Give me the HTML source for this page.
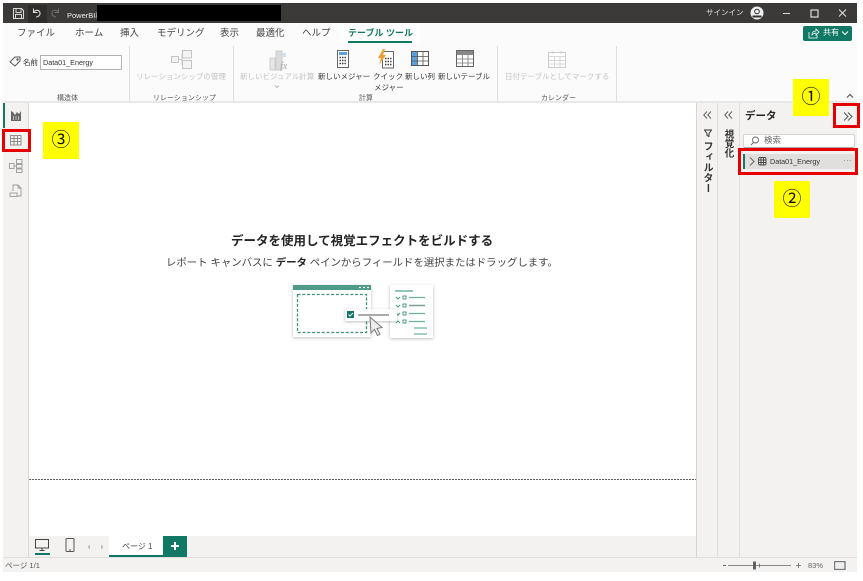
<!DOCTYPE html>
<html lang="ja"><head><meta charset="utf-8"><style>
html,body{margin:0;padding:0;background:#fff}
#p{position:relative;width:863px;height:581px;overflow:hidden;background:#fff;font-family:"Liberation Sans","Noto Sans CJK JP",sans-serif;color:#333;filter:blur(.3px)}
#p div,#p svg{position:absolute}
.t{white-space:nowrap;line-height:1}
.g{color:#c4c2c0 !important}
.line{background:#e1dfdd}
.red{border:3px solid #e60000;box-sizing:border-box}
.y{background:#ff0;color:#111;text-align:center;font-size:19px}
.tab{font-size:9.5px;color:#444;top:29px}
.rb{font-size:7.5px;color:#333;top:73px}
.gl{font-size:7px;color:#555;top:95px}
</style></head><body><div id="p">
<!-- title bar -->
<div style="left:3px;top:3px;width:854px;height:20px;background:#3b3a39"></div>
<div style="left:28px;top:5px;width:19px;height:18px;background:#2e2d2c"></div>
<svg style="left:12px;top:6px" width="50" height="15" fill="none" stroke="#d8d8d8" stroke-width="1"><path d="M1.500 2.500h8l2 2v8h-10zM4 2.500v4h5v-4M3.500 12.500v-4h6v4"/><path d="M21.500 2.500v4h4M21.500 6.500c2-3 6-3 6.500 .5 .3 2.500-2 4-4 4" stroke-width="1.100"/><path d="M46.500 2.500v4h-4M46.500 6.500c-2-3-6-3-6.500 .5-.3 2.500 2 4 4 4" stroke="#6e6d6c"/></svg>
<div class="t" style="left:67px;top:12px;font-size:7.5px;color:#eee">PowerBI検</div>
<div style="left:97px;top:5px;width:184px;height:16px;background:#000"></div>
<div class="t" style="left:706px;top:9px;font-size:7.5px;color:#ddd">サインイン</div>
<svg style="left:750px;top:6px" width="14" height="14"><circle cx="7" cy="7" r="6.500" fill="#eee"/><circle cx="7" cy="5.500" r="2.300" fill="none" stroke="#333"/><path d="M2.500 10.500h9" stroke="#333" stroke-width="2"/></svg>
<svg style="left:780px;top:7px" width="70" height="12" fill="none" stroke="#ddd"><path d="M3 6.500h7"/><rect x="31" y="3" width="7" height="7" stroke-width="1.200"/><path d="M59 2.500l7 7M66 2.500l-7 7" stroke-width="1.100"/></svg>
<!-- ribbon -->
<div style="left:3px;top:23px;width:854px;height:78px;background:#fbfbfb"></div>
<div style="left:3px;top:101px;width:854px;height:2px;background:#e9e8e7"></div>
<div style="left:339px;top:24px;width:81px;height:19px;background:#fff"></div>
<div class="t tab" style="left:17px">ファイル</div>
<div class="t tab" style="left:75px">ホーム</div>
<div class="t tab" style="left:120px">挿入</div>
<div class="t tab" style="left:157px">モデリング</div>
<div class="t tab" style="left:220px">表示</div>
<div class="t tab" style="left:256px">最適化</div>
<div class="t tab" style="left:302px">ヘルプ</div>
<div class="t tab" style="left:348px;color:#117865;font-weight:bold;font-size:9px">テーブル ツール</div>
<div style="left:348px;top:41px;width:64px;height:2px;background:#117865"></div>
<div style="left:803px;top:26px;width:49px;height:15px;background:#117865;border-radius:2px"></div>
<svg style="left:808px;top:28px" width="12" height="11" fill="none" stroke="#fff"><path d="M1 4v6h8V7M4 7c0-3 2-4 4-4V1l3 3-3 3V5c-2 0-3 1-4 2z" stroke-width=".8"/></svg>
<div class="t" style="left:823px;top:29px;font-size:8px;color:#fff">共有</div>
<svg style="left:841px;top:30px" width="8" height="7" fill="none" stroke="#fff"><path d="M1 1.500l3 3 3-3"/></svg>
<svg style="left:846px;top:93px" width="8" height="6" fill="none" stroke="#555" stroke-width="1.200"><path d="M1 4.500l3-3 3 3"/></svg>
<!-- name -->
<svg style="left:9px;top:56px" width="13" height="11" fill="none" stroke="#555"><path d="M1 6l5-5h5v4l-5 5z"/><circle cx="8.500" cy="3.500" r=".7"/></svg>
<div class="t rb" style="left:23px;top:59px">名前</div>
<div style="left:40px;top:55px;width:82px;height:15px;background:#fff;border:1px solid #b5b3b1;box-sizing:border-box"></div>
<div class="t" style="left:43px;top:59px;font-size:7.2px;color:#333">Data01_Energy</div>
<div class="line" style="left:129px;top:46px;width:1px;height:55px"></div>
<div class="line" style="left:233px;top:46px;width:1px;height:55px"></div>
<div class="line" style="left:497px;top:46px;width:1px;height:55px"></div>
<div class="line" style="left:616px;top:46px;width:1px;height:55px"></div>
<div class="t gl" style="left:57px">構造体</div>
<div class="t gl" style="left:153px">リレーションシップ</div>
<div class="t gl" style="left:359px">計算</div>
<div class="t gl" style="left:541px">カレンダー</div>
<!-- ribbon icons -->
<svg style="left:171px;top:50px" width="22" height="20" fill="#f4f4f4" stroke="#c4c4c4"><rect x=".5" y="6.500" width="7" height="6"/><rect x="11.500" y=".5" width="9" height="7.500"/><rect x="11.500" y="10.500" width="9" height="8"/><path d="M7.500 9.500h4M11 4v11" fill="none"/></svg>
<div class="t rb g" style="left:136px">リレーションシップの管理</div>
<svg style="left:269px;top:50px" width="20" height="21"><rect x="1" y="8" width="5" height="12" fill="#e6e6e6" stroke="#ccc"/><rect x="7" y="1" width="6" height="19" fill="#dcdcdc" stroke="#ccc"/><rect x="13" y="3" width="4" height="4" fill="#cfe0ee"/><text x="11" y="19" font-size="10" font-style="italic" fill="#aaa" font-family="Liberation Serif">fx</text></svg>
<div class="t rb g" style="left:240px">新しいビジュアル計算</div>
<svg style="left:274px;top:85px" width="6" height="4" fill="none" stroke="#bbb"><path d="M1 .5l2 2 2-2"/></svg>
<div class="t rb" style="left:318px">新しいメジャー</div>
<svg style="left:337px;top:50px" width="13" height="19"><rect x=".5" y=".5" width="11" height="17" fill="#fff" stroke="#666"/><rect x="2" y="2" width="8" height="3" fill="#5aa3e0"/><path d="M2.500 7.500h7M2.500 10.500h7M2.500 13.500h7" stroke="#444" stroke-width="1.500" stroke-dasharray="1.500 1"/></svg>
<div class="t rb" style="left:373px">クイック</div>
<div class="t rb" style="left:374px;top:84px">メジャー</div>
<svg style="left:377px;top:49px" width="18" height="20"><rect x="5.500" y="2.500" width="11" height="16.500" fill="#fff" stroke="#666"/><path d="M8 9.500h7M8 12.500h7M8 15.500h7" stroke="#444" stroke-width="1.500" stroke-dasharray="1.500 1"/><path d="M6 0L1 9h3l-2 7 7-10H6l2-6z" fill="#f0a030"/></svg>
<div class="t rb" style="left:405px">新しい列</div>
<svg style="left:411px;top:51px" width="19" height="16"><rect x=".5" y=".5" width="17" height="14" fill="#fff" stroke="#555"/><rect x="1" y="1" width="5.500" height="13" fill="#5aa3e0"/><path d="M6.500 1v13M12 1v13M1 5.500h16M1 10h16" stroke="#555" stroke-width=".8"/></svg>
<div class="t rb" style="left:438px">新しいテーブル</div>
<svg style="left:456px;top:50px" width="19" height="18"><rect x=".5" y=".5" width="17" height="16" fill="#fff" stroke="#666"/><rect x="1" y="1" width="16" height="4" fill="#888"/><path d="M6.500 5v11M12 5v11M1 9h16M1 13h16" stroke="#777" stroke-width=".8"/></svg>
<svg style="left:548px;top:50px" width="19" height="19"><rect x=".5" y="2.500" width="17" height="15" fill="#fff" stroke="#ccc"/><path d="M1 6.500h16M6.500 7v10M12 7v10M1 10.500h16M1 14h16M5 1v3M13 1v3" stroke="#ccc" stroke-width=".8"/></svg>
<div class="t rb g" style="left:505px">日付テーブルとしてマークする</div>
<!-- left nav -->
<div style="left:3px;top:103px;width:25px;height:454px;background:#f3f2f1"></div>
<div style="left:28px;top:103px;width:1px;height:454px;background:#dcdad8"></div>
<div style="left:3px;top:103px;width:1.500px;height:25px;background:#117865"></div>
<svg style="left:10px;top:110px" width="12" height="12"><path d="M1 1v10h10V1l-2 3-2-2-2 3-2-3z" fill="#666"/><path d="M3.500 6v4M6 6v4M8.500 6v4" stroke="#ddd" stroke-width=".7"/></svg>
<svg style="left:10px;top:135px" width="12" height="11" fill="#f3f2f1" stroke="#777" stroke-width=".8"><rect x=".5" y=".5" width="10.500" height="9.500"/><path d="M4 1v9M7.500 1v9M1 3.500h10M1 6.500h10" fill="none"/></svg>
<svg style="left:9px;top:159px" width="14" height="14" fill="none" stroke="#999" stroke-width=".9"><rect x=".5" y="4.500" width="4.500" height="5"/><rect x="7.500" y=".5" width="5.500" height="4"/><rect x="7.500" y="5.500" width="5.500" height="3.500"/><rect x="7.500" y="10" width="5.500" height="3.500"/><path d="M5 7h2.500"/></svg>
<svg style="left:9px;top:184px" width="14" height="14" fill="none" stroke="#999" stroke-width=".9"><path d="M4 7V1h5l3 3v8H8M9 1v3h3"/><rect x="1" y="9" width="7" height="3.500"/></svg>
<div class="red" style="left:2px;top:129px;width:29px;height:23px"></div>
<div class="y" style="left:43px;top:122px;width:36px;height:37px;line-height:37px">③</div>
<!-- centre text -->
<div class="t" style="left:231px;top:235px;font-size:12.5px;font-weight:bold;color:#252423">データを使用して視覚エフェクトをビルドする</div>
<div class="t" style="left:166px;top:259px;font-size:10.4px;color:#444">レポート キャンバスに <b style="color:#252423">データ</b> ペインからフィールドを選択またはドラッグします。</div>
<!-- illustration -->
<svg style="left:288px;top:282px" width="150" height="62">
<defs><filter id="s" x="-10%" y="-15%" width="120%" height="135%"><feDropShadow dx="0" dy="1" stdDeviation="1.500" flood-color="#000" flood-opacity=".25"/></filter></defs>
<rect x="5" y="3" width="78" height="52" fill="#fff" filter="url(#s)"/>
<rect x="5" y="3" width="78" height="5" fill="#4f9a88"/>
<path d="M71 5.500h2M75 5.500h2M79 5.500h2" stroke="#fff" stroke-width="1.200"/>
<rect x="9.500" y="12.500" width="69" height="38" fill="none" stroke="#3f8f7c" stroke-width="1.300" stroke-dasharray="3 1.800"/>
<rect x="102" y="3" width="43" height="53" fill="#fff" filter="url(#s)"/>
<path d="M107 9h18" stroke="#6fb0a0" stroke-width="1.500"/>
<path d="M108 15l2 2 2-2M108 23l2 2 2-2M108 31l2 2 2-2M108 41l2-2 2 2" fill="none" stroke="#4f9a88"/>
<path d="M115 14h3v3h-3zM115 22h3v3h-3zM115 30h3v3h-3zM115 38h3v3h-3z" fill="none" stroke="#4f9a88"/>
<path d="M121 15.500h16M121 31.500h16M121 39.500h16M126 46h13M126 52h13" stroke="#6fb0a0" stroke-width="1.200"/>
<path d="M121 23.500h16" stroke="#7f9f98" stroke-width="1.500"/>
<rect x="57" y="27" width="52" height="12" fill="#fff" filter="url(#s)"/>
<rect x="59" y="29" width="7" height="7" fill="#117865"/><path d="M60.500 32.500l1.500 1.500 3-3" stroke="#fff" fill="none"/>
<path d="M70 33h31" stroke="#555" stroke-width="1"/>
<path d="M82 35l1 16 3.500-3.500 3 6 2.500-1.500-3-5.500 5-1z" fill="#eee" stroke="#777"/>
</svg>
<!-- canvas divider -->
<div style="left:29px;top:479px;width:667px;height:1px;background:repeating-linear-gradient(90deg,#666 0 2px,#e4e4e4 2px 3px)"></div>
<!-- panes -->
<div style="left:696px;top:103px;width:161px;height:454px;background:#f3f2f1"></div>
<div style="left:696px;top:103px;width:1px;height:454px;background:#d8d6d4"></div>
<div style="left:717px;top:103px;width:1px;height:454px;background:#e1dfdd"></div>
<div style="left:739px;top:103px;width:1px;height:454px;background:#e1dfdd"></div>
<svg style="left:703px;top:111px" width="9" height="8" fill="none" stroke="#444" stroke-width=".9"><path d="M4 .5L.8 4 4 7.500M8 .5L4.800 4 8 7.500"/></svg>
<svg style="left:724px;top:111px" width="9" height="8" fill="none" stroke="#444" stroke-width=".9"><path d="M4 .5L.8 4 4 7.500M8 .5L4.800 4 8 7.500"/></svg>
<svg style="left:704px;top:129px" width="8" height="8" fill="none" stroke="#333"><path d="M.5 1h7L5 4.500V7.500L3 6.500V4.500z"/></svg>
<div class="t" style="left:701px;top:141px;writing-mode:vertical-rl;font-size:10px;font-weight:bold;color:#333;letter-spacing:.6px">フィルター</div>
<div class="t" style="left:723px;top:129px;writing-mode:vertical-rl;font-size:9.5px;font-weight:bold;color:#333">視覚化</div>
<div class="t" style="left:745px;top:111px;font-size:10.5px;font-weight:bold;color:#252423">データ</div>
<svg style="left:843px;top:112px" width="10" height="9" fill="none" stroke="#555" stroke-width="1"><path d="M1 .5L5 4.500 1 8.500M5 .5L9 4.500 5 8.500"/></svg>
<div class="red" style="left:833px;top:103px;width:27px;height:25px"></div>
<div class="y" style="left:793px;top:79px;width:36px;height:37px;line-height:37px">①</div>
<div style="left:743px;top:134px;width:112px;height:14px;background:#fff;border-radius:2px;border:1px solid #d6d4d2;border-bottom-color:#aaa;box-sizing:border-box"></div>
<svg style="left:750px;top:136px" width="10" height="10" fill="none" stroke="#666" stroke-width=".9"><circle cx="5.500" cy="4" r="3"/><path d="M3.500 6.500L1 9"/></svg>
<div class="t" style="left:764px;top:136px;font-size:8.5px;color:#666">検索</div>
<div style="left:743px;top:154px;width:111px;height:15px;background:#e1dfdd;border-radius:2px"></div>
<div style="left:743px;top:154px;width:2px;height:15px;background:#117865"></div>
<svg style="left:749px;top:157px" width="6" height="9" fill="none" stroke="#666"><path d="M1 .5l4 4-4 4"/></svg>
<svg style="left:758px;top:157px" width="9" height="9" fill="none" stroke="#444" stroke-width=".9"><rect x=".5" y=".5" width="7.500" height="7.500" rx="1.500"/><path d="M3 1v7M5.500 1v7M1 3h7M1 5.500h7"/></svg>
<div class="t" style="left:770px;top:158px;font-size:7.2px;color:#333">Data01_Energy</div>
<div class="t" style="left:843px;top:157px;font-size:8px;color:#777;letter-spacing:.3px">···</div>
<div class="red" style="left:738px;top:148px;width:120px;height:27px"></div>
<div class="y" style="left:774px;top:181px;width:36px;height:37px;line-height:37px">②</div>
<!-- page tabs -->
<div style="left:29px;top:536px;width:667px;height:21px;background:#f3f2f1"></div>
<svg style="left:35px;top:539px" width="15" height="15" fill="none" stroke="#444"><rect x=".5" y=".5" width="13" height="8.500"/><path d="M7 9v2M4.500 11.500h5"/></svg>
<div style="left:35px;top:553px;width:15px;height:1.500px;background:#117865"></div>
<svg style="left:65px;top:538px" width="11" height="15" fill="none" stroke="#555"><rect x="1" y=".5" width="8" height="13" rx="1"/><path d="M4 12h2"/></svg>
<svg style="left:87px;top:544px" width="20" height="6" fill="#bbb"><path d="M3 .5L.5 3 3 5.500zM14 .5L16.500 3 14 5.500z"/></svg>
<div style="left:109px;top:536px;width:54px;height:21px;background:#fff"></div>
<div style="left:109px;top:555px;width:54px;height:2px;background:#117865"></div>
<div class="t" style="left:122px;top:543px;font-size:8px;color:#444">ページ 1</div>
<div style="left:163px;top:536px;width:24px;height:21px;background:#117865"></div>
<svg style="left:170px;top:541px" width="10" height="10"><path d="M5 1v8M1 5h8" stroke="#fff" stroke-width="2"/></svg>
<!-- status bar -->
<div style="left:3px;top:557px;width:854px;height:15px;background:#f3f2f1;border-top:1px solid #e1dfdd;box-sizing:border-box"></div>
<div class="t" style="left:5px;top:562px;font-size:7.5px;color:#555">ページ 1/1</div>
<svg style="left:722px;top:560px" width="80" height="11" stroke="#666"><path d="M1 5.500h3" stroke-width="1"/><path d="M6 5.500h63" stroke-width=".8"/><rect x="31.500" y="2" width="2" height="7" fill="#555"/><path d="M37.500 3.500v4" stroke-width=".8"/><path d="M74 5.500h5M76.500 3v5" stroke-width=".8"/></svg>
<div class="t" style="left:808px;top:562px;font-size:7.5px;color:#666">83%</div>
<svg style="left:834px;top:561px" width="12" height="9" fill="#eee" stroke="#777" stroke-width="1.300"><rect x=".5" y=".5" width="10.500" height="8"/></svg>
</div></body></html>
